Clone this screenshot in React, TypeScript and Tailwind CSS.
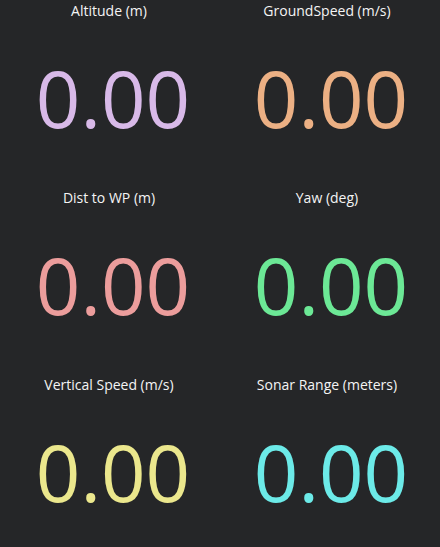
const items = [
  { label: "Altitude (m)", color: "text-[#d8b9e8]" },
  { label: "GroundSpeed (m/s)", color: "text-[#ecb084]" },
  { label: "Dist to WP (m)", color: "text-[#ec9d9c]" },
  { label: "Yaw (deg)", color: "text-[#6ce896]" },
  { label: "Vertical Speed (m/s)", color: "text-[#ebe78d]" },
  { label: "Sonar Range (meters)", color: "text-[#6ceae8]" },
]

export default function App() {
  return (
    <div className="w-[440px] h-[547px] overflow-hidden bg-[#252628] font-['Open_Sans',sans-serif]">
      <div className="grid grid-cols-2 w-[436px]">
        {items.map((item) => (
          <div key={item.label} className="h-[187px] flex flex-col items-center">
            <div className="mt-[1px] text-[14px] leading-5 text-[#f4f4f4]">{item.label}</div>
            <div className={`mt-[38px] pl-2 text-[78px] leading-none ${item.color}`}>0.00</div>
          </div>
        ))}
      </div>
    </div>
  )
}
